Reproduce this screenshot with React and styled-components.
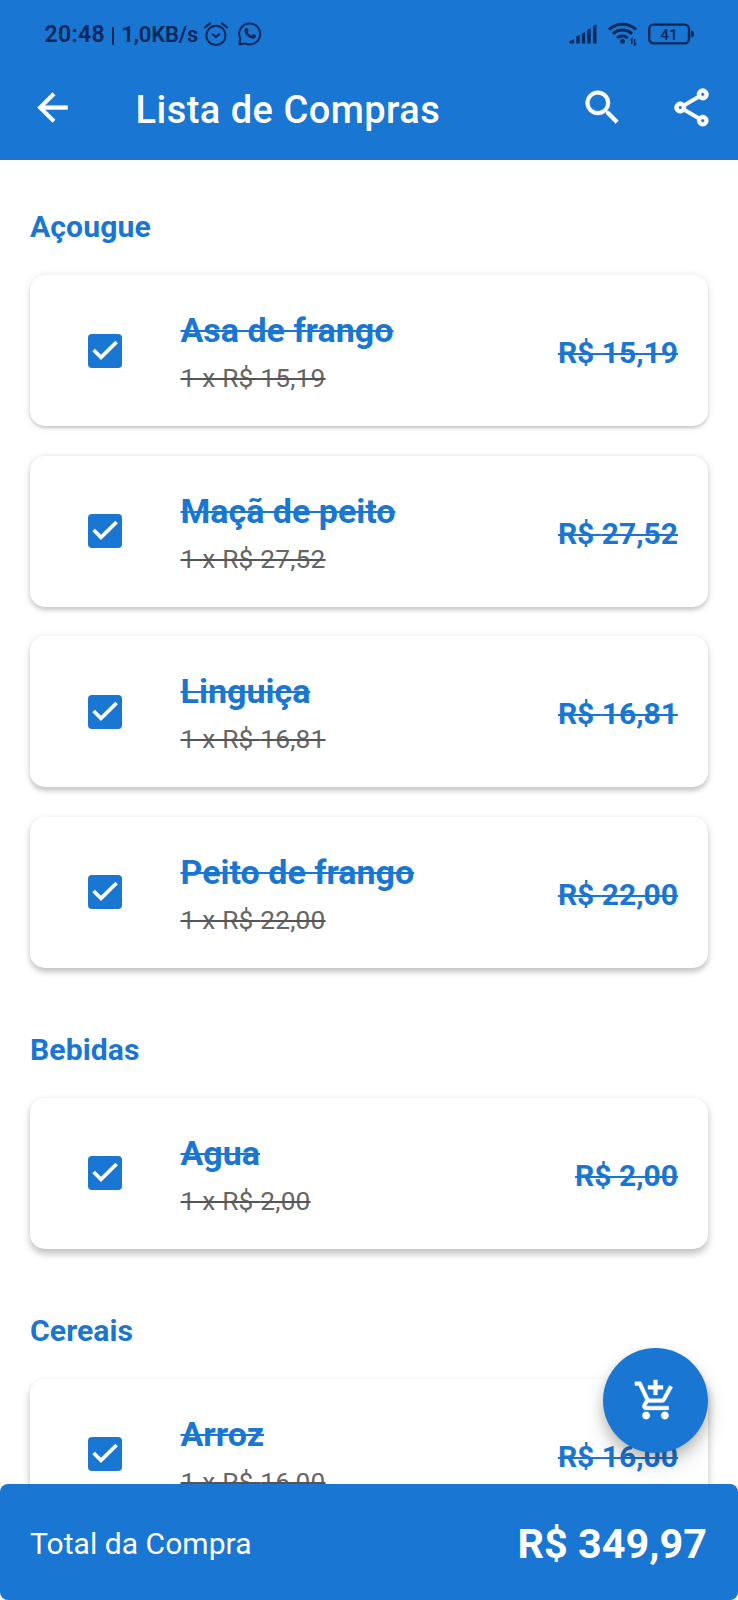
import React from "react";
import styled, { createGlobalStyle } from "styled-components";
import {
  MdArrowBack,
  MdSearch,
  MdOutlineShare,
  MdAddShoppingCart,
} from "react-icons/md";

const BLUE = "#1976d2";
const INK = "#07285a";

const GlobalStyle = createGlobalStyle`
  * { box-sizing: border-box; }
  body { margin: 0; background: #fff; font-family: Roboto, "Liberation Sans", sans-serif; }
`;

const Screen = styled.div`
  position: relative;
  display: flex;
  flex-direction: column;
  width: 738px;
  height: 1600px;
  overflow: hidden;
  background: #fff;
`;

const Header = styled.header`
  flex: none;
  height: 160px;
  background: ${BLUE};
`;

const StatusBar = styled.div`
  display: flex;
  align-items: center;
  justify-content: space-between;
  height: 68px;
  padding: 0 44px 0 44.5px;
  color: ${INK};
`;

const StatusGroup = styled.div`
  display: flex;
  align-items: center;
  gap: ${(p) => p.$gap}px;
`;

const StatusText = styled.span`
  width: ${(p) => p.$width}px;
  font-size: ${(p) => p.$size}px;
  font-weight: 600;
  line-height: 26px;
  letter-spacing: ${(p) => p.$spacing || 0}px;
  white-space: nowrap;
  padding-top: 1px;
`;

const StatusDivider = styled.span`
  width: 2px;
  height: 18px;
  margin: 3px 8px 0 7px;
  background: ${INK};
`;

const Toolbar = styled.div`
  display: flex;
  align-items: center;
  height: 79px;
  padding: 0 24px 0 30px;
  color: #fff;
`;

const IconButton = styled.button`
  display: flex;
  padding: 0;
  border: 0;
  background: none;
  color: inherit;
  svg {
    width: 45px;
    height: 45px;
    stroke: currentColor;
    stroke-width: ${(p) => p.$weight || 0.25}px;
  }
  path[fill="none"] { stroke: none; }
`;

const Title = styled.h1`
  flex: 1;
  margin: 4px 0 0 60.5px;
  font-size: 38px;
  font-weight: 500;
  line-height: 44px;
  letter-spacing: 0.48px;
`;

const Actions = styled.div`
  display: flex;
  gap: 44px;
`;

const List = styled.main`
  flex: 1;
  min-height: 0;
  overflow: hidden;
  padding: 0 30px;
`;

const Section = styled.section`
  display: flex;
  flex-direction: column;
  gap: 29.6px;
  padding-bottom: 15px;
`;

const SectionTitle = styled.h2`
  margin: 0 0 -29.6px;
  height: 115px;
  padding-top: 47px;
  color: ${BLUE};
  font-size: 30.1px;
  font-weight: 700;
  line-height: 40px;
  letter-spacing: 0.1px;
`;

const Card = styled.article`
  display: flex;
  flex: none;
  height: 151px;
  padding: 30px 30px 0 58px;
  border-radius: 15px;
  background: #fff;
  box-shadow:
    0 ${(p) => 2 + p.$depth * 0.7}px ${(p) => 3 + p.$depth}px rgba(0, 0, 0, 0.16),
    0 ${(p) => 1 + p.$depth * 0.6}px 8px rgba(0, 0, 0, 0.1);
`;

const CheckBox = styled.span`
  display: flex;
  width: 34px;
  height: 34px;
  margin: 28.7px 58.5px 0 0;
  border-radius: 4px;
  background: ${BLUE};
`;

const ItemBody = styled.div`
  flex: 1;
`;

const ItemName = styled.div`
  color: ${BLUE};
  font-size: 34px;
  font-weight: 700;
  line-height: 50px;
  text-decoration: line-through;
  text-decoration-thickness: 2px;
`;

const ItemDetail = styled.div`
  margin-top: -1px;
  color: #666;
  font-size: 26.3px;
  line-height: 48px;
  letter-spacing: 0.2px;
  text-decoration: line-through #555;
  text-decoration-thickness: 1.5px;
`;

const ItemPrice = styled.div`
  margin-top: 28px;
  color: ${BLUE};
  font-size: 30px;
  font-weight: 700;
  line-height: 40px;
  text-decoration: line-through;
  text-decoration-thickness: 2px;
`;

const Footer = styled.footer`
  display: flex;
  flex: none;
  align-items: center;
  justify-content: space-between;
  height: 116px;
  padding: 0 31px 0 30px;
  border-radius: 8px;
  background: ${BLUE};
  color: #fff;
`;

const TotalLabel = styled.span`
  padding-top: 3px;
  font-size: 30px;
  letter-spacing: 0.05px;
`;

const TotalValue = styled.span`
  padding-top: 3px;
  font-size: 41.4px;
  font-weight: 700;
`;

const Fab = styled.button`
  position: absolute;
  right: 30px;
  bottom: 147px;
  display: flex;
  align-items: center;
  justify-content: center;
  width: 105px;
  height: 105px;
  padding: 0;
  border: 0;
  border-radius: 50%;
  background: ${BLUE};
  color: #fff;
  box-shadow: 0 6px 12px rgba(0, 0, 0, 0.18), 0 12px 22px rgba(0, 0, 0, 0.14);
  svg { width: 45px; height: 45px; stroke: currentColor; stroke-width: 0.2px; }
  path[fill="none"] { stroke: none; }
`;

const AlarmIcon = () => (
  <svg width="24" height="24" viewBox="0 0 24 24" fill="none" stroke={INK} strokeWidth="2" strokeLinecap="round" strokeLinejoin="round">
    <circle cx="12" cy="13.4" r="9.6" />
    <path d="M1 5.4 6 1.4M23 5.4 18 1.4M8.8 12.4 12 15l3.2-2.6" />
  </svg>
);

const WhatsAppIcon = () => (
  <svg width="24" height="24" viewBox="0 0 24 24">
    <path d="M1.4 22.3 2.3 16.6A10.5 10.5 0 1 1 7.2 21.4Z" fill="none" stroke={INK} strokeWidth="2" strokeLinejoin="round" />
    <path d="M8.2 6.1c.6-.4 1.1-.2 1.4.4l.8 1.8c.2.5.1.8-.8 1.9.8 1.6 2 2.7 3.8 3.5l1.2-1.4c.3-.3.6-.4 1-.2l2 1c.5.3.5.6.3 1.3-.5 1.6-2 2.4-3.6 2.1-4-.9-7-3.6-7.8-7.2-.2-1.4.5-2.5 1.7-3.2Z" fill={INK} />
  </svg>
);

const SignalIcon = () => (
  <svg width="28" height="20" viewBox="0 0 28 20" fill={INK}>
    <path d="M.5 19.5V17.5l4.7-2.5v4.5Z" />
    <path d="M7.3 12.4l3.4-1.3v8.4h-3.4zM12.8 9.5l3.4-1.3v11.3h-3.4zM18.3 5.7l3.4-1.3v15.1h-3.4zM24.1 1.8l3.4-1.3v19h-3.4z" />
  </svg>
);

const WifiIcon = () => (
  <svg width="29" height="24" viewBox="0 0 29 24" fill="none" stroke={INK} strokeWidth="3">
    <path d="M1 7.5C8.5.4 20.5.4 28 7.5M5 11.8c5.4-5 13.6-5 19 0M9.2 16c3-2.7 7.6-2.7 10.6 0" />
    <circle cx="14.5" cy="19.4" r="2.4" fill={INK} stroke="none" />
    <path d="M23.8 22v-5l-1.3 1.5M26.6 17v6l1.3-1.5" strokeWidth="1.5" />
  </svg>
);

const BatteryIcon = () => (
  <svg width="46" height="22" viewBox="0 0 46 22">
    <rect x="1.2" y="1.6" width="39.8" height="18.8" rx="4.5" fill="none" stroke={INK} strokeWidth="2.4" />
    <path d="M43 7.5c2 .3 3 1.5 3 3.5s-1 3.2-3 3.5z" fill={INK} />
    <text x="21" y="16.5" textAnchor="middle" fontSize="15.5" fontWeight="500" fill={INK}>41</text>
  </svg>
);

const CheckMark = () => (
  <svg width="34" height="34" viewBox="0 0 34 34" fill="none" stroke="#fff" strokeWidth="3.7">
    <path d="M5.6 16 13 23.4 28.6 8" />
  </svg>
);

const SECTIONS = [
  {
    title: "Açougue",
    items: [
      { name: "Asa de frango", price: "15,19", depth: 0 },
      { name: "Maçã de peito", price: "27,52", depth: 1 },
      { name: "Linguiça", price: "16,81", depth: 1.5 },
      { name: "Peito de frango", price: "22,00", depth: 2.5 },
    ],
  },
  { title: "Bebidas", items: [{ name: "Agua", price: "2,00", depth: 4 }] },
  { title: "Cereais", items: [{ name: "Arroz", price: "16,00", depth: 5 }] },
];

const Item = ({ name, price, depth }) => (
  <Card $depth={depth}>
    <CheckBox role="checkbox" aria-checked="true"><CheckMark /></CheckBox>
    <ItemBody>
      <ItemName>{name}</ItemName>
      <ItemDetail>1 x R$ {price}</ItemDetail>
    </ItemBody>
    <ItemPrice>R$ {price}</ItemPrice>
  </Card>
);

export default function App() {
  return (
    <Screen>
      <GlobalStyle />
      <Header>
        <StatusBar>
          <StatusGroup $gap={0}>
            <StatusText $size={23} $width={60} $spacing={0.3}>20:48</StatusText>
            <StatusDivider />
            <StatusText $size={22} $width={82} $spacing={-0.2}>1,0KB/s</StatusText>
            <StatusGroup $gap={10}>
              <AlarmIcon />
              <WhatsAppIcon />
            </StatusGroup>
          </StatusGroup>
          <StatusGroup $gap={11}>
            <SignalIcon />
            <WifiIcon />
            <BatteryIcon />
          </StatusGroup>
        </StatusBar>
        <Toolbar>
          <IconButton aria-label="Voltar"><MdArrowBack /></IconButton>
          <Title>Lista de Compras</Title>
          <Actions>
            <IconButton aria-label="Buscar"><MdSearch /></IconButton>
            <IconButton aria-label="Compartilhar" $weight={0.4}><MdOutlineShare /></IconButton>
          </Actions>
        </Toolbar>
      </Header>
      <List>
        {SECTIONS.map((s) => (
          <Section key={s.title}>
            <SectionTitle>{s.title}</SectionTitle>
            {s.items.map((item) => (
              <Item key={item.name} {...item} />
            ))}
          </Section>
        ))}
      </List>
      <Footer>
        <TotalLabel>Total da Compra</TotalLabel>
        <TotalValue>R$ 349,97</TotalValue>
      </Footer>
      <Fab aria-label="Adicionar item"><MdAddShoppingCart /></Fab>
    </Screen>
  );
}
